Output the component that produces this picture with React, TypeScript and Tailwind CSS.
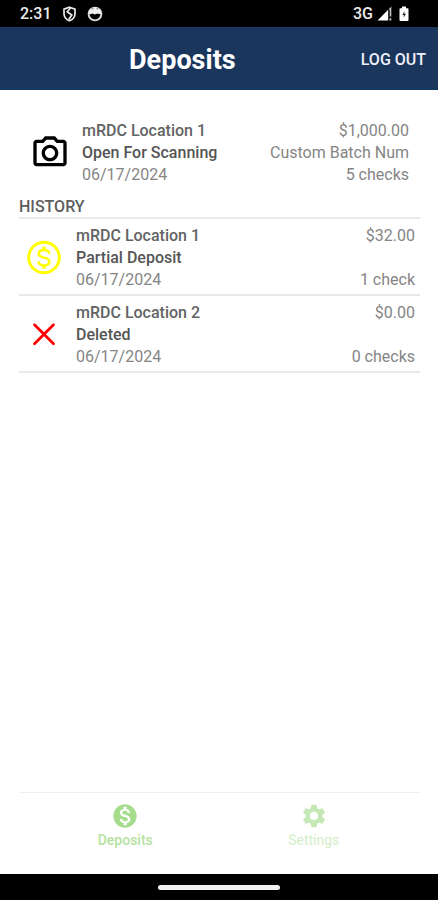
import type { ReactNode } from "react"
import { MdMonetizationOn, MdOutlinePhotoCamera, MdSettings } from "react-icons/md"

type Deposit = {
  location: string
  status: string
  date: string
  amount: string
  batch?: string
  checks: string
}

const OPEN_DEPOSIT: Deposit = {
  location: "mRDC Location 1",
  status: "Open For Scanning",
  date: "06/17/2024",
  amount: "$1,000.00",
  batch: "Custom Batch Num",
  checks: "5 checks",
}

const HISTORY: (Deposit & { icon: ReactNode })[] = [
  {
    icon: <DollarIcon />,
    location: "mRDC Location 1",
    status: "Partial Deposit",
    date: "06/17/2024",
    amount: "$32.00",
    checks: "1 check",
  },
  {
    icon: <CrossIcon />,
    location: "mRDC Location 2",
    status: "Deleted",
    date: "06/17/2024",
    amount: "$0.00",
    checks: "0 checks",
  },
]

function DollarIcon() {
  return (
    <svg width="40" height="40" viewBox="0 0 40 40" fill="none" stroke="#ffff00">
      <circle cx="20" cy="19.500" r="15.300" strokeWidth="2.900" />
      <path
        d="M25.500 15.800C25 13.300 22.900 12 20 12c-3.200 0-5.200 1.500-5.200 3.800 0 2.500 2.300 3.200 5.200 3.800s5.400 1.400 5.400 4c0 2.300-2.200 3.800-5.400 3.800-3.100 0-5.300-1.500-5.600-4"
        strokeWidth="2.500"
      />
      <path d="M20 8.700V12M20 27.400v3.300" strokeWidth="3.400" />
    </svg>
  )
}

function CrossIcon() {
  return (
    <svg width="40" height="40" viewBox="0 0 40 40" fill="none" stroke="#ff0000" strokeWidth="2.800" strokeLinecap="round">
      <path d="M10.500 9.800 29.500 28.800M29.500 9.800 10.500 28.800" />
    </svg>
  )
}

function StatusBar() {
  return (
    <div className="flex h-[27px] items-center justify-between bg-black pl-5 pr-[29px] pt-px text-white">
      <div className="flex items-center">
        <span className="w-[42px] text-base font-medium text-[#ececec]">2:31</span>
        <svg width="15" height="16" viewBox="0 0 15 16" fill="none" stroke="#e8e8e8" strokeWidth="1.700">
          <path d="M7.500 1.200 13 3.200V7.500C13 11 10.800 13.600 7.500 14.800 4.200 13.600 2 11 2 7.500V3.200Z" />
          <path d="M8.500 2 5.200 5.800 9.800 9 6.800 13.500" />
        </svg>
        <svg width="16" height="16" viewBox="0 0 16 16" className="ml-[10px]">
          <circle cx="8" cy="8" r="6.400" fill="none" stroke="#dcdcdc" strokeWidth="1.900" />
          <path d="M1.600 7.600C2 3.500 5 1.400 8 1.400s6 2.100 6.400 6.200l-2.200.6-1.800-.8-2.400 1-2.500-1-1.700.9Z" fill="#f0f0f0" />
          <path d="M4.600 2.800h2M9.500 2.800h1.800" stroke="#555" strokeWidth=".8" />
        </svg>
      </div>
      <div className="flex items-center">
        <span className="text-base font-medium text-[#ececec]">3G</span>
        <svg width="16" height="16" viewBox="0 0 16 16" className="ml-1" fill="#fff">
          <path d="M.5 14.500 11.200 3.800V14.500Z" />
          <path d="M11.200 3.800 14.300.6V10.500H12.700V3.500ZM12.500 12.300h1.800v2.200h-1.800Z" fill="#c4c4c4" />
        </svg>
        <svg width="10" height="16" viewBox="0 0 10 16" className="ml-[6px]">
          <path d="M3 .5h4v1.700h1.500q1 0 1 1v10.800q0 1-1 1h-7q-1 0-1-1V3.200q0-1 1-1H3Z" fill="#fff" />
          <path d="M5.400 5.300 3.400 9h1.400v2.700l2-3.900H5.400Z" fill="#222" />
        </svg>
      </div>
    </div>
  )
}

function DepositText({ deposit }: { deposit: Deposit }) {
  return (
    <div className="flex min-w-0 flex-1 justify-between text-base leading-[22px] text-[#858585]">
      <div>
        <div className="font-medium text-[#636363]">{deposit.location}</div>
        <div className="font-medium text-[#555555]">{deposit.status}</div>
        <div>{deposit.date}</div>
      </div>
      <div className="flex flex-col text-right">
        <div>{deposit.amount}</div>
        {deposit.batch && <div>{deposit.batch}</div>}
        <div className="mt-auto">{deposit.checks}</div>
      </div>
    </div>
  )
}

export default function App() {
  return (
    <div className="flex min-h-screen flex-col bg-white font-[Roboto,sans-serif]">
      <StatusBar />
      <header className="flex h-[63px] items-center border-b-2 border-[#123a5e] bg-[#1b365d] px-3 text-white">
        <h1 className="flex-1 pr-2 pt-1 text-center text-[27px] font-bold leading-8">Deposits</h1>
        <button type="button" className="pt-1 text-base font-medium text-[#eef0fa]">
          LOG OUT
        </button>
      </header>

      <main className="flex-1 pl-[19px] pr-[18px] pt-[30px]">
        <div className="flex items-center gap-3 pl-[11px] pr-[11px]">
          <MdOutlinePhotoCamera size={40} className="shrink-0 text-black" />
          <DepositText deposit={OPEN_DEPOSIT} />
        </div>

        <h2 className="mt-[11px] border-b-2 border-[#e9e9e9] text-base font-medium leading-5 text-[#5e5e5e]">
          HISTORY
        </h2>
        <ul>
          {HISTORY.map((item) => (
            <li
              key={item.location}
              className="flex items-center gap-3 border-b-2 border-[#e9e9e9] pb-[3px] pl-[5px] pr-[5px] pt-[6px]"
            >
              <div className="shrink-0">{item.icon}</div>
              <DepositText deposit={item} />
            </li>
          ))}
        </ul>
      </main>

      <nav className="ml-[19px] mr-[18px] grid h-[82px] grid-cols-2 border-t border-[#f0f0f0] px-3 pt-[9px] text-sm leading-5">
        <a href="#deposits" className="flex flex-col items-center text-[#a6dd8d]">
          <MdMonetizationOn size={28} />
          <span className="font-medium text-[#b5e3a0]">Deposits</span>
        </a>
        <a href="#settings" className="flex flex-col items-center text-[#c5e9b6]">
          <MdSettings size={28} />
          <span className="text-[#d3eec7]">Settings</span>
        </a>
      </nav>

      <div className="flex h-[26px] items-center justify-center bg-black">
        <div className="h-[5px] w-[122px] rounded-full bg-[#f0f0f0]" />
      </div>
    </div>
  )
}
